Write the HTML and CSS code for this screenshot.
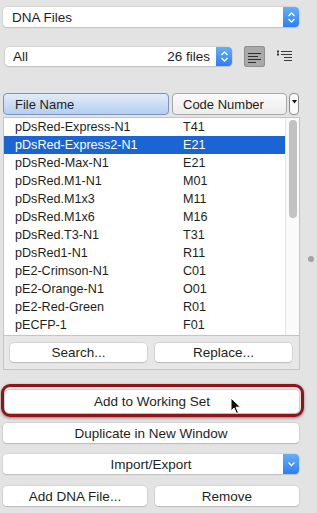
FILE: index.html
```html
<!DOCTYPE html>
<html lang="en">
  <head>
    <meta charset="UTF-8" />
    <title>DNA Files</title>
    <link rel="stylesheet" href="styles.css">
  </head>
  <body>
    <div class="pane">
      <div class="popup">
        <span class="popup__label">DNA Files</span>
        <span class="stepper">
          <svg width="9" height="13" viewBox="0 0 9 13"><path d="M1.5 5 L4.5 2 L7.5 5 M1.5 8 L4.5 11 L7.5 8" fill="none" stroke="#fff" stroke-width="1.4"/></svg>
        </span>
      </div>

      <div class="toolbar">
        <div class="popup popup--filter">
          <span class="popup__label">All</span>
          <span class="popup__count">26 files</span>
          <span class="stepper">
            <svg width="9" height="13" viewBox="0 0 9 13"><path d="M1.5 5 L4.5 2 L7.5 5 M1.5 8 L4.5 11 L7.5 8" fill="none" stroke="#fff" stroke-width="1.4"/></svg>
          </span>
        </div>
        <button class="view view--on">
          <svg width="14" height="11" viewBox="0 0 14 11"><path d="M0 1.5 H13 M0 4.5 H10 M0 7.5 H13 M0 10.5 H8" stroke="#2e2e2e" stroke-width="1"/></svg>
        </button>
        <span class="view">
          <svg width="17" height="13" viewBox="0 0 17 13"><path d="M1 0.5 H3 V2.5 H1 Z M1 3.5 H3 V5.5 H1 Z" fill="#333"/><path d="M5 1.5 H16 M5 4.5 H16 M8 7.5 H16 M8 10.5 H16" stroke="#3a3a3a" stroke-width="1"/></svg>
        </span>
      </div>

      <div class="headers">
        <div class="col-head col-head--active">File Name</div>
        <div class="col-head col-head--code">Code Number</div>
        <div class="col-menu">
          <svg width="5" height="4" viewBox="0 0 5 4"><path d="M0 0 H5 L2.5 3.5 Z" fill="#111"/></svg>
        </div>
      </div>

      <div class="browser">
        <div class="browser__list">
          <ul class="files">
            <li><span>pDsRed-Express-N1</span><span>T41</span></li>
            <li class="selected"><span>pDsRed-Express2-N1</span><span>E21</span></li>
            <li><span>pDsRed-Max-N1</span><span>E21</span></li>
            <li><span>pDsRed.M1-N1</span><span>M01</span></li>
            <li><span>pDsRed.M1x3</span><span>M11</span></li>
            <li><span>pDsRed.M1x6</span><span>M16</span></li>
            <li><span>pDsRed.T3-N1</span><span>T31</span></li>
            <li><span>pDsRed1-N1</span><span>R11</span></li>
            <li><span>pE2-Crimson-N1</span><span>C01</span></li>
            <li><span>pE2-Orange-N1</span><span>O01</span></li>
            <li><span>pE2-Red-Green</span><span>R01</span></li>
            <li><span>pECFP-1</span><span>F01</span></li>
          </ul>
          <div class="scrollbar"><div class="scrollbar__thumb"></div></div>
        </div>
        <div class="pair pair--inner">
          <button class="btn">Search...</button>
          <button class="btn">Replace...</button>
        </div>
      </div>

      <div class="focus">
        <button class="btn btn--tall">Add to Working Set</button>
        <svg class="cursor" width="12" height="18" viewBox="0 0 12 18"><path d="M1 1 L1 14 L4 11 L6.5 16.5 L8.5 15.5 L6 10.2 L10.5 10.2 Z" fill="#111" stroke="#fff" stroke-width="1"/></svg>
      </div>

      <button class="btn btn--full btn--dup">Duplicate in New Window</button>

      <div class="popup popup--centered">
        <span class="popup__label">Import/Export</span>
        <span class="stepper">
          <svg width="9" height="6" viewBox="0 0 9 6"><path d="M1.5 1.5 L4.5 4.5 L7.5 1.5" fill="none" stroke="#fff" stroke-width="1.4"/></svg>
        </span>
      </div>

      <div class="pair pair--bottom">
        <button class="btn">Add DNA File...</button>
        <button class="btn">Remove</button>
      </div>
    </div>

    <span class="splitter-dot"></span>
  </body>
</html>
```

FILE: styles.css
```css
* {
  padding: 0;
  margin: 0;
  box-sizing: border-box;
}

body {
  background: #e3e3e3;
  font-family: "Liberation Sans", Arial, sans-serif;
  font-size: 13px;
  color: #1e1e1e;
  height: 513px;
  overflow: hidden;
  position: relative;
}

.pane {
  width: 297px;
  margin-left: 3px;
  padding-top: 7px;
  display: flex;
  flex-direction: column;
}

/* popups */

.popup {
  height: 20px;
  width: 296px;
  display: flex;
  align-items: center;
  background: #fff;
  border-radius: 4px;
  box-shadow: 0 0 0 0.5px #c6c6c6, 0 1px 1px rgba(0, 0, 0, 0.18);
  font-size: 13.5px;
}

.popup__label {
  flex: 1;
  padding-left: 9px;
}

.popup__count {
  padding-right: 6px;
}

.stepper {
  width: 16px;
  height: 100%;
  display: flex;
  align-items: center;
  justify-content: center;
  background: linear-gradient(#66aefc, #2b7ff4);
  border-radius: 0 4px 4px 0;
}

.popup--filter {
  width: 227px;
  margin-left: 2px;
  height: 19px;
}

.popup--filter .popup__label {
  padding-left: 8px;
}

.popup--centered {
  margin-top: 11px;
}

.popup--centered .popup__label {
  text-align: center;
  padding-left: 16px;
}

/* toolbar */

.toolbar {
  margin-top: 19px;
  height: 21px;
  display: flex;
  align-items: center;
}

.view {
  border: none;
  background: none;
  display: flex;
  align-items: center;
  justify-content: center;
}

.view--on {
  width: 21px;
  height: 21px;
  margin-left: 12px;
  background: #a9a9a9;
  border-radius: 3px;
  box-shadow: inset 0 0 0 1px #8f8f8f;
}

.view--on svg {
  margin-top: 1px;
}

.toolbar .view:last-child {
  margin-left: 11px;
}

/* column headers */

.headers {
  margin-top: 26px;
  height: 22px;
  display: flex;
  gap: 3px;
}

.col-head {
  height: 22px;
  line-height: 21px;
  padding-left: 11px;
  border-radius: 4px;
  border: 1px solid #a9a9a9;
  background: linear-gradient(#fbfbfb, #ececec);
}

.col-head--active {
  width: 166px;
  border-color: #7b93bd;
  background: linear-gradient(#e2ecf9, #b4cff0);
}

.col-head--code {
  width: 115px;
  padding-left: 10px;
}

.col-menu {
  width: 10px;
  height: 22px;
  margin-left: -1px;
  border: 1px solid #8a8a8a;
  border-radius: 4px;
  background: #fafafa;
  display: flex;
  justify-content: center;
  padding-top: 6px;
}

/* file browser box */

.browser {
  margin-top: 2px;
  width: 297px;
  border: 1px solid #c4c4c4;
  background: #e7e7e7;
}

.browser__list {
  height: 218px;
  display: flex;
  background: #fff;
  border-bottom: 1px solid #c4c4c4;
}

.files {
  list-style: none;
  flex: 1;
  font-size: 12.6px;
}

.files li {
  height: 18px;
  line-height: 18px;
  display: grid;
  grid-template-columns: 168px 1fr;
  padding-left: 11px;
}

.files li.selected {
  background: #1b64d3;
  color: #fff;
}

.scrollbar {
  width: 14px;
  background: #fafafa;
  border-left: 1px solid #e6e6e6;
  padding: 2px 0 0 3px;
}

.scrollbar__thumb {
  width: 8px;
  height: 98px;
  border-radius: 4px;
  background: #c2c2c2;
}

/* buttons */

.btn {
  height: 20px;
  background: #fff;
  border: none;
  border-radius: 4px;
  box-shadow: 0 0 0 0.5px #c2c2c2, 0 1px 1px rgba(0, 0, 0, 0.2);
  font-family: "Liberation Sans", Arial, sans-serif;
  font-size: 13.5px;
  color: #1e1e1e;
}

.pair {
  display: flex;
  justify-content: space-between;
}

.pair .btn {
  width: 137px;
}

.pair--inner {
  padding: 7px 7px 7px 6px;
}

.pair--inner .btn {
  height: 19px;
}

.pair--bottom {
  margin-top: 12px;
  width: 296px;
}

.pair--bottom .btn {
  width: 144px;
}

.focus {
  position: relative;
  margin-top: 20px;
  margin-left: 2px;
  width: 294px;
}

.focus::before {
  content: "";
  position: absolute;
  top: -6px;
  bottom: -4px;
  left: -4px;
  right: -5px;
  border: 3px solid #8e1519;
  border-radius: 9px;
  box-shadow: 0 1px 3px rgba(0, 0, 0, 0.45);
}

.btn--tall {
  width: 100%;
  height: 23px;
  display: block;
}

.cursor {
  position: absolute;
  left: 225px;
  top: 7px;
}

.btn--full {
  width: 296px;
}

.btn--dup {
  margin-top: 10px;
}

.splitter-dot {
  position: absolute;
  left: 308px;
  top: 256px;
  width: 6px;
  height: 6px;
  border-radius: 50%;
  background: #a3a3a3;
}
```
